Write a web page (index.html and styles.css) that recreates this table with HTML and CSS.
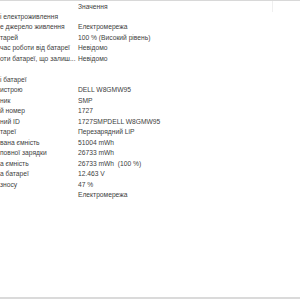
FILE: index.html
```html
<!DOCTYPE html>
<html lang="uk">
<head>
<meta charset="utf-8">
<link rel="stylesheet" href="styles.css">
</head>
<body>
<div class="view">
  <div class="header">
    <div class="hcell hname"></div>
    <div class="hcell hval">Значення</div>
    <div class="hcell hrest"></div>
  </div>
  <div class="rows">
    <div class="row"><span class="k">і електроживлення</span><span class="v"></span></div>
    <div class="row"><span class="k">е джерело живлення</span><span class="v">Електромережа</span></div>
    <div class="row"><span class="k">тарей</span><span class="v">100 % (Високий рівень)</span></div>
    <div class="row"><span class="k">час роботи від батареї</span><span class="v">Невідомо</span></div>
    <div class="row"><span class="k">оти батареї, що залиш...</span><span class="v">Невідомо</span></div>
    <div class="row"><span class="k"></span><span class="v"></span></div>
    <div class="row"><span class="k">і батареї</span><span class="v"></span></div>
    <div class="row"><span class="k">истрою</span><span class="v">DELL W8GMW95</span></div>
    <div class="row"><span class="k">ник</span><span class="v">SMP</span></div>
    <div class="row"><span class="k">й номер</span><span class="v">1727</span></div>
    <div class="row"><span class="k">ний ID</span><span class="v">1727SMPDELL W8GMW95</span></div>
    <div class="row"><span class="k">тареї</span><span class="v">Перезарядний LiP</span></div>
    <div class="row"><span class="k">вана ємність</span><span class="v">51004 mWh</span></div>
    <div class="row"><span class="k">повної зарядки</span><span class="v">26733 mWh</span></div>
    <div class="row"><span class="k">а ємність</span><span class="v">26733 mWh&nbsp; (100 %)</span></div>
    <div class="row"><span class="k">а батареї</span><span class="v">12.463 V</span></div>
    <div class="row"><span class="k">зносу</span><span class="v">47 %</span></div>
    <div class="row"><span class="k"></span><span class="v">Електромережа</span></div>
  </div>
  <div class="bottom"></div>
</div>
</body>
</html>
```

FILE: styles.css
```css
html, body {
  margin: 0;
  padding: 0;
  background: #fff;
}
.view {
  width: 300px;
  height: 300px;
  display: flex;
  flex-direction: column;
  overflow: hidden;
  font-family: "Liberation Sans", Arial, sans-serif;
  font-size: 6.7px;
  color: #404040;
}
.header {
  display: flex;
  height: 11px;
  border-top: 1px solid #d8d8d8;
  flex: none;
}
.hcell {
  line-height: 11px;
  white-space: nowrap;
}
.hname {
  width: 78px;
}
.hval {
  width: 194px;
  border-right: 1px solid #efefef;
}
.hrest {
  flex: 1;
}
.rows {
  display: flex;
  flex-direction: column;
  flex: 1;
}
.row {
  display: flex;
  height: 10.47px;
  line-height: 10.47px;
  white-space: nowrap;
}
.k {
  width: 76px;
  margin-right: 2px;
  overflow: hidden;
}
.v {
  flex: 1;
}
.bottom {
  flex: none;
  height: 2px;
  background: #dadada;
  margin-bottom: 1px;
}
```
